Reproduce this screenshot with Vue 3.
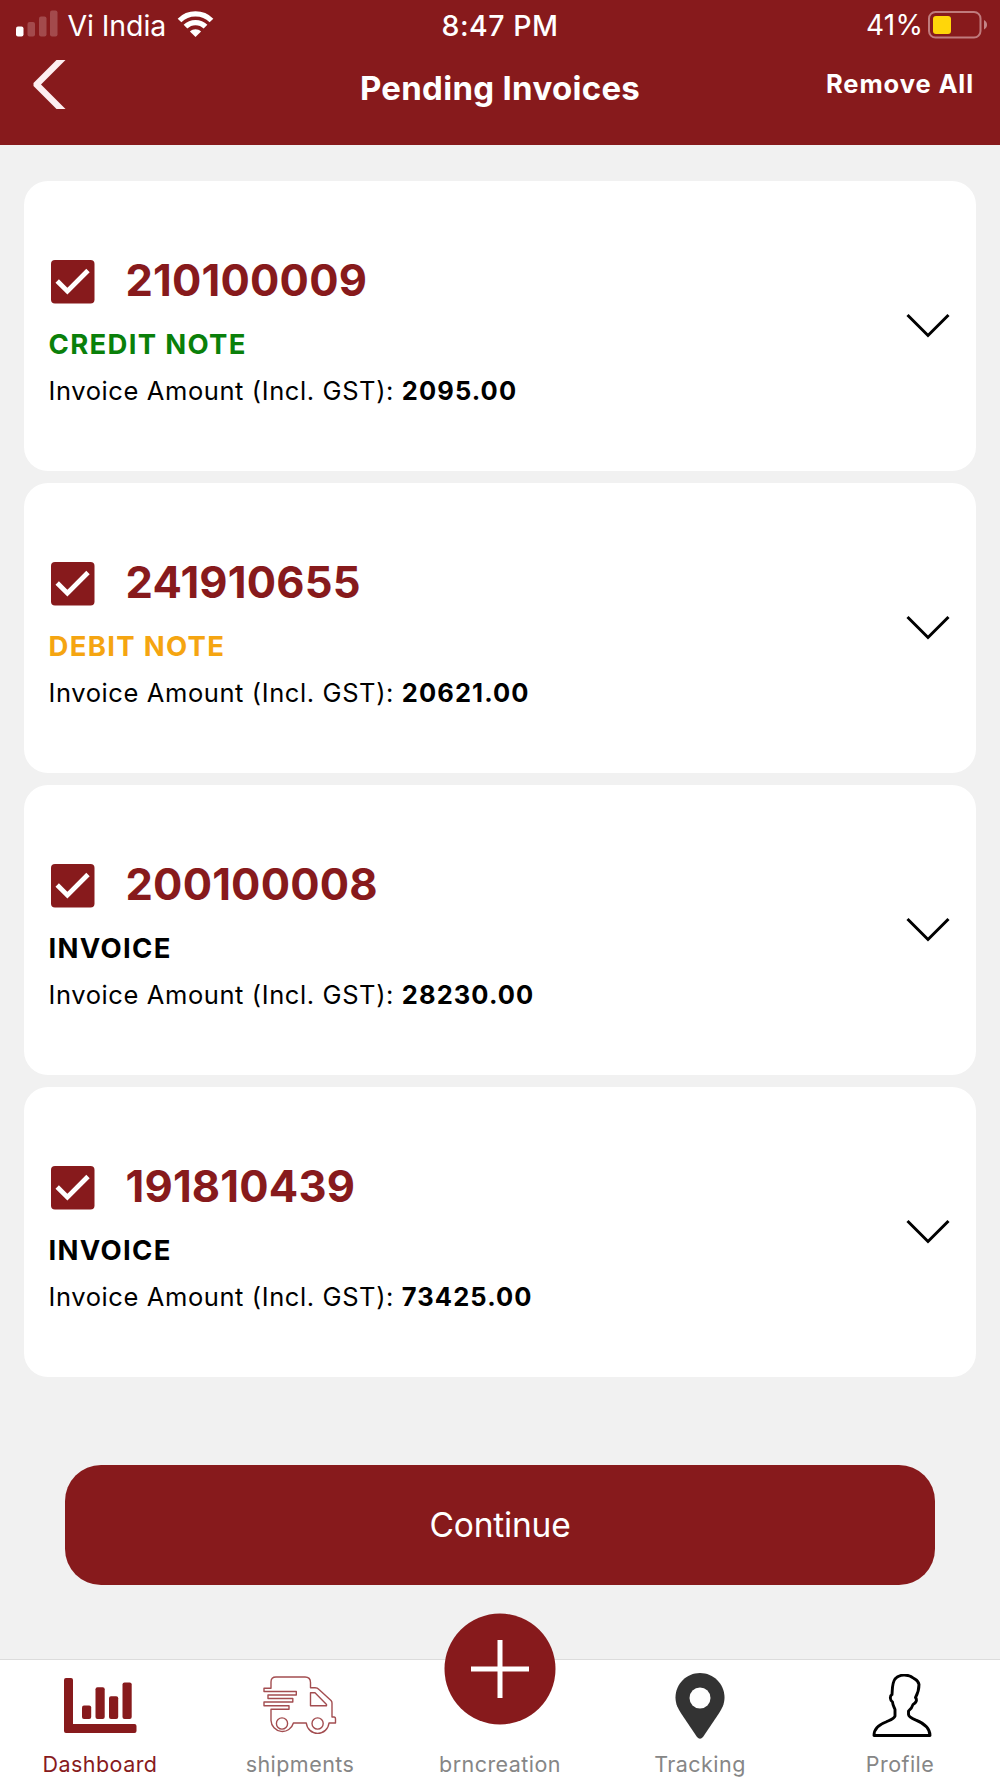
<template>
  <div class="screen">
    <header class="header">
      <div class="statusBar">
        <div class="carrier">
          <svg class="signal" width="42" height="27" viewBox="0 0 42 27">
            <rect x="0" y="16.5" width="7.5" height="10" rx="2" fill="#fff" />
            <rect x="11.5" y="12" width="7.5" height="14.5" rx="2" fill="#a34a4c" />
            <rect x="23" y="6.5" width="7.5" height="20" rx="2" fill="#a34a4c" />
            <rect x="34" y="0.5" width="7.5" height="26" rx="2" fill="#a34a4c" />
          </svg>
          <span class="carrierName">Vi India</span>
          <svg class="wifi" width="37" height="28" viewBox="0 0 38 28">
            <g fill="none" stroke="#fff" stroke-width="5.4">
              <path d="M2.6 10.4 C11.6 1.4 26.4 1.4 35.4 10.4" />
              <path d="M8.7 16.8 C14.4 11.1 23.6 11.1 29.3 16.8" />
            </g>
            <path d="M19 27.3 L13.3 21.6 C16.5 18.6 21.5 18.6 24.7 21.6 Z" fill="#fff" />
          </svg>
        </div>
        <span class="time">8:47 PM</span>
        <div class="power">
          <span class="percent">41%</span>
          <svg class="battery" width="60" height="28" viewBox="0 0 60 28">
            <rect x="1" y="1" width="51.5" height="25.5" rx="6.5" fill="none" stroke="#c07b7d" stroke-width="2" />
            <rect x="5" y="5" width="18" height="18" rx="3" fill="#ffd60a" />
            <path d="M56 9 C60 11 60 16.5 56 18.5 Z" fill="#c38486" />
          </svg>
        </div>
      </div>
      <div class="navBar">
        <button class="backBtn">
          <svg width="34" height="49" viewBox="0 0 34 49">
            <path d="M23.5 0 H32.5 L8 24.5 L32.5 49 H23.5 L0.5 26 V23 Z" fill="#fdeef0" />
          </svg>
        </button>
        <h1 class="title">Pending Invoices</h1>
        <button class="removeAll" @click="removeAll">Remove All</button>
      </div>
    </header>

    <main class="content">
      <div class="card" v-for="item in invoices" :key="item.number">
        <div class="details">
          <div class="numberRow" @click="item.checked = !item.checked">
            <svg class="checkbox" width="44" height="44" viewBox="0 0 44 44">
              <rect x="0" y="0" width="43.5" height="43.5" rx="4" fill="#871a1c" />
              <path v-if="item.checked" d="M6.2 21 L16.4 31.2 L37 10.5" fill="none" stroke="#fff" stroke-width="4.8" />
            </svg>
            <span class="number">{{ item.number }}</span>
          </div>
          <div class="type" :class="typeColor(item)">{{ item.type }}</div>
          <div class="amount">Invoice Amount (Incl. GST): <b>{{ item.amount }}</b></div>
        </div>
        <svg class="chevron" width="44" height="26" viewBox="0 0 44 26">
          <path d="M1.5 2 L22 22.5 L42.5 2" fill="none" stroke="#000" stroke-width="3" />
        </svg>
      </div>
      <button class="continueBtn">Continue</button>
    </main>

    <nav class="tabBar">
      <a class="tab active">
        <svg width="73" height="56" viewBox="0 0 73 56">
          <g fill="#871a1c">
            <path d="M2 0 H7 Q9 0 9 2 V46 H70.500 Q72.500 46 72.500 48 V53 Q72.500 55 70.500 55 H2 Q0 55 0 53 V2 Q0 0 2 0 Z" />
            <rect x="18" y="27.500" width="9.200" height="13.500" rx="2" />
            <rect x="31.500" y="9.200" width="9.200" height="31.800" rx="2" />
            <rect x="45" y="18.200" width="9.200" height="22.800" rx="2" />
            <rect x="58.500" y="4.500" width="9.200" height="36.500" rx="2" />
          </g>
        </svg>
        <span class="tabLabel">Dashboard</span>
      </a>
      <a class="tab">
        <svg width="74" height="60" viewBox="0 0 74 60">
          <g fill="none" stroke="#a34d50" stroke-width="1.4" stroke-linejoin="round">
            <path d="M8 12.300 V6 Q8 1 13 1 H42 Q47.500 1 47.500 6.500 V11.800 H52 Q54.500 11.800 56 13.500 L68 24.500 Q69 25.500 69 27 V41 H71 Q72.500 41 72.500 43 V47 H66 A11.400 11.400 0 0 1 43.300 47 H30.400 A11.400 11.400 0 0 1 8 44.500 V33.300 H26 V29.800 H1 V26 H29.800 V22.500 H5 V19 H33.300 V15.500 H1 V12.300 Z" />
            <path d="M47.500 16.800 H52 L63.500 28.500 V29.700 H47.500 Z" />
            <circle cx="19" cy="47.500" r="5.600" />
            <circle cx="54.600" cy="47.500" r="5.600" />
          </g>
        </svg>
        <span class="tabLabel">shipments</span>
      </a>
      <a class="tab">
        <svg class="plus" width="112" height="112" viewBox="0 0 112 112">
          <circle cx="56" cy="56" r="55.500" fill="#871a1c" />
          <path d="M56 27 V85 M27 56 H85" stroke="#fff" stroke-width="5" />
        </svg>
        <span class="tabLabel">brncreation</span>
      </a>
      <a class="tab">
        <svg class="pin" width="50" height="66" viewBox="0 0 50 66">
          <path d="M25 0 C11.500 0 0.500 11 0.500 24.500 C0.500 31 3 35.500 6.500 41 L22 64 Q25 67.500 28 64 L43.500 41 C47 35.500 49.500 31 49.500 24.500 C49.500 11 38.500 0 25 0 Z" fill="#333" />
          <circle cx="25" cy="25" r="10.500" fill="#fff" />
        </svg>
        <span class="tabLabel">Tracking</span>
      </a>
      <a class="tab">
        <svg class="person" width="60" height="64" viewBox="0 0 60 64">
          <path d="M2 61.500 H58 C58 54 52 49.500 44 46.200 C39 44 36.500 42.500 36.500 40.500 V37 C39.500 34.500 40.500 32.500 41 30.500 C44 29 45.500 26 43.500 23.500 C46 19 47 14 47 10.500 C46.500 6.500 43.500 5.500 42 4.500 C36 -0.500 27 0.200 23 5 C20 9 20.500 15 20 20.500 C17.500 22 18 26.500 20.500 28 C20.700 31 22 33 23 35.500 V42 C22 45 17 46.500 14 48 C7 50.500 2 54 2 61.500 Z" fill="none" stroke="#000" stroke-width="2.900" stroke-linejoin="round" />
        </svg>
        <span class="tabLabel">Profile</span>
      </a>
    </nav>
  </div>
</template>

<script setup>
import { ref } from 'vue'

const invoices = ref([
  { number: '210100009', type: 'CREDIT NOTE', amount: '2095.00', checked: true },
  { number: '241910655', type: 'DEBIT NOTE', amount: '20621.00', checked: true },
  { number: '200100008', type: 'INVOICE', amount: '28230.00', checked: true },
  { number: '191810439', type: 'INVOICE', amount: '73425.00', checked: true }
])

const removeAll = () => {
  invoices.value = []
}

const typeColor = (item) => {
  if (item.type == 'CREDIT NOTE')
    return 'credit'

  if (item.type == 'DEBIT NOTE')
    return 'debit'

  return 'invoice'
}
</script>

<style>
body {
  margin: 0;
  background-color: #f1f1f1;
}
</style>

<style scoped>
.screen {
  display: flex;
  flex-direction: column;
  width: 1000px;
  height: 1778px;
  overflow: hidden;
  background-color: #f1f1f1;
  font-family: Inter, "Liberation Sans", sans-serif;
  color: #000;
}

svg {
  display: block;
  flex-shrink: 0;
}

button {
  border: 0;
  padding: 0;
  background: none;
  font-family: inherit;
  color: #fff;
}

.header {
  height: 145px;
  background-color: #871a1c;
  color: #fff;
}

.statusBar {
  display: grid;
  grid-template-columns: 1fr auto 1fr;
  height: 50px;
  box-sizing: border-box;
  padding: 10px 12px 0;
  font-size: 28px;
  line-height: 31px;
}

.carrier,
.power {
  display: flex;
  align-items: flex-start;
}

.carrier {
  padding-left: 4px;
}

.power {
  justify-content: flex-end;
}

.carrierName {
  margin-left: 9.5px;
  font-size: 28.5px;
  letter-spacing: -0.1px;
  white-space: nowrap;
}

.wifi {
  margin-left: 11px;
}

.time {
  font-weight: 500;
  font-size: 28.5px;
  letter-spacing: 0.5px;
}

.percent {
  margin-right: 4.5px;
  letter-spacing: 0.4px;
}

.battery {
  margin-top: 1px;
}

.navBar {
  display: grid;
  grid-template-columns: 1fr auto 1fr;
  align-items: start;
  padding: 10px 27px 0;
}

.backBtn {
  justify-self: start;
  margin-left: 6px;
}

.title {
  margin: 7.5px 0 0;
  font-size: 33px;
  line-height: 40px;
  font-weight: 700;
  letter-spacing: 0.3px;
}

.removeAll {
  justify-self: end;
  margin-top: 4px;
  margin-right: -1px;
  font-size: 25.5px;
  line-height: 40px;
  font-weight: 700;
  letter-spacing: 0.9px;
}

.content {
  flex: 1;
  display: flex;
  flex-direction: column;
  gap: 12px;
  padding: 36px 24px 0;
}

.card {
  display: flex;
  justify-content: space-between;
  box-sizing: border-box;
  height: 290px;
  padding: 79px 26.5px 0 24.5px;
  border-radius: 24px;
  background-color: #fff;
}

.numberRow {
  display: flex;
  align-items: flex-start;
  margin-left: 2px;
  height: 44px;
}

.number {
  margin-left: 31px;
  margin-top: -2.5px;
  font-size: 43.5px;
  line-height: 44px;
  font-weight: 700;
  letter-spacing: 0.2px;
  color: #871a1c;
}

.type {
  margin-top: 22.5px;
  font-size: 27.5px;
  line-height: 34px;
  font-weight: 700;
  letter-spacing: 1.3px;
}

.credit {
  color: #0a800a;
}

.debit {
  color: #f5a511;
}

.invoice {
  color: #000;
}

.amount {
  margin-top: 13px;
  font-size: 25.5px;
  line-height: 34px;
  letter-spacing: 0.6px;
  white-space: nowrap;
}

.amount b {
  font-weight: 700;
  letter-spacing: 1.1px;
}

.chevron {
  margin-top: 53px;
}

.continueBtn {
  margin: 75.5px 41px 0;
  height: 120.5px;
  border-radius: 36px;
  background-color: #871a1c;
  font-size: 33.5px;
  letter-spacing: -0.2px;
}

.tabBar {
  display: grid;
  grid-template-columns: repeat(5, 200px);
  height: 119px;
  box-sizing: border-box;
  border-top: 1.5px solid #dcdcdc;
  background-color: #fff;
}

.tab {
  display: grid;
  grid-template-rows: 91px 27px;
  justify-items: center;
  align-items: center;
  color: #868686;
}

.plus {
  margin-top: -73px;
}

.pin {
  margin-right: 1px;
}

.person {
  margin-left: 3px;
}

.active {
  color: #871a1c;
}

.tabLabel {
  font-size: 21.5px;
  line-height: 27px;
  letter-spacing: 0.45px;
}
</style>
